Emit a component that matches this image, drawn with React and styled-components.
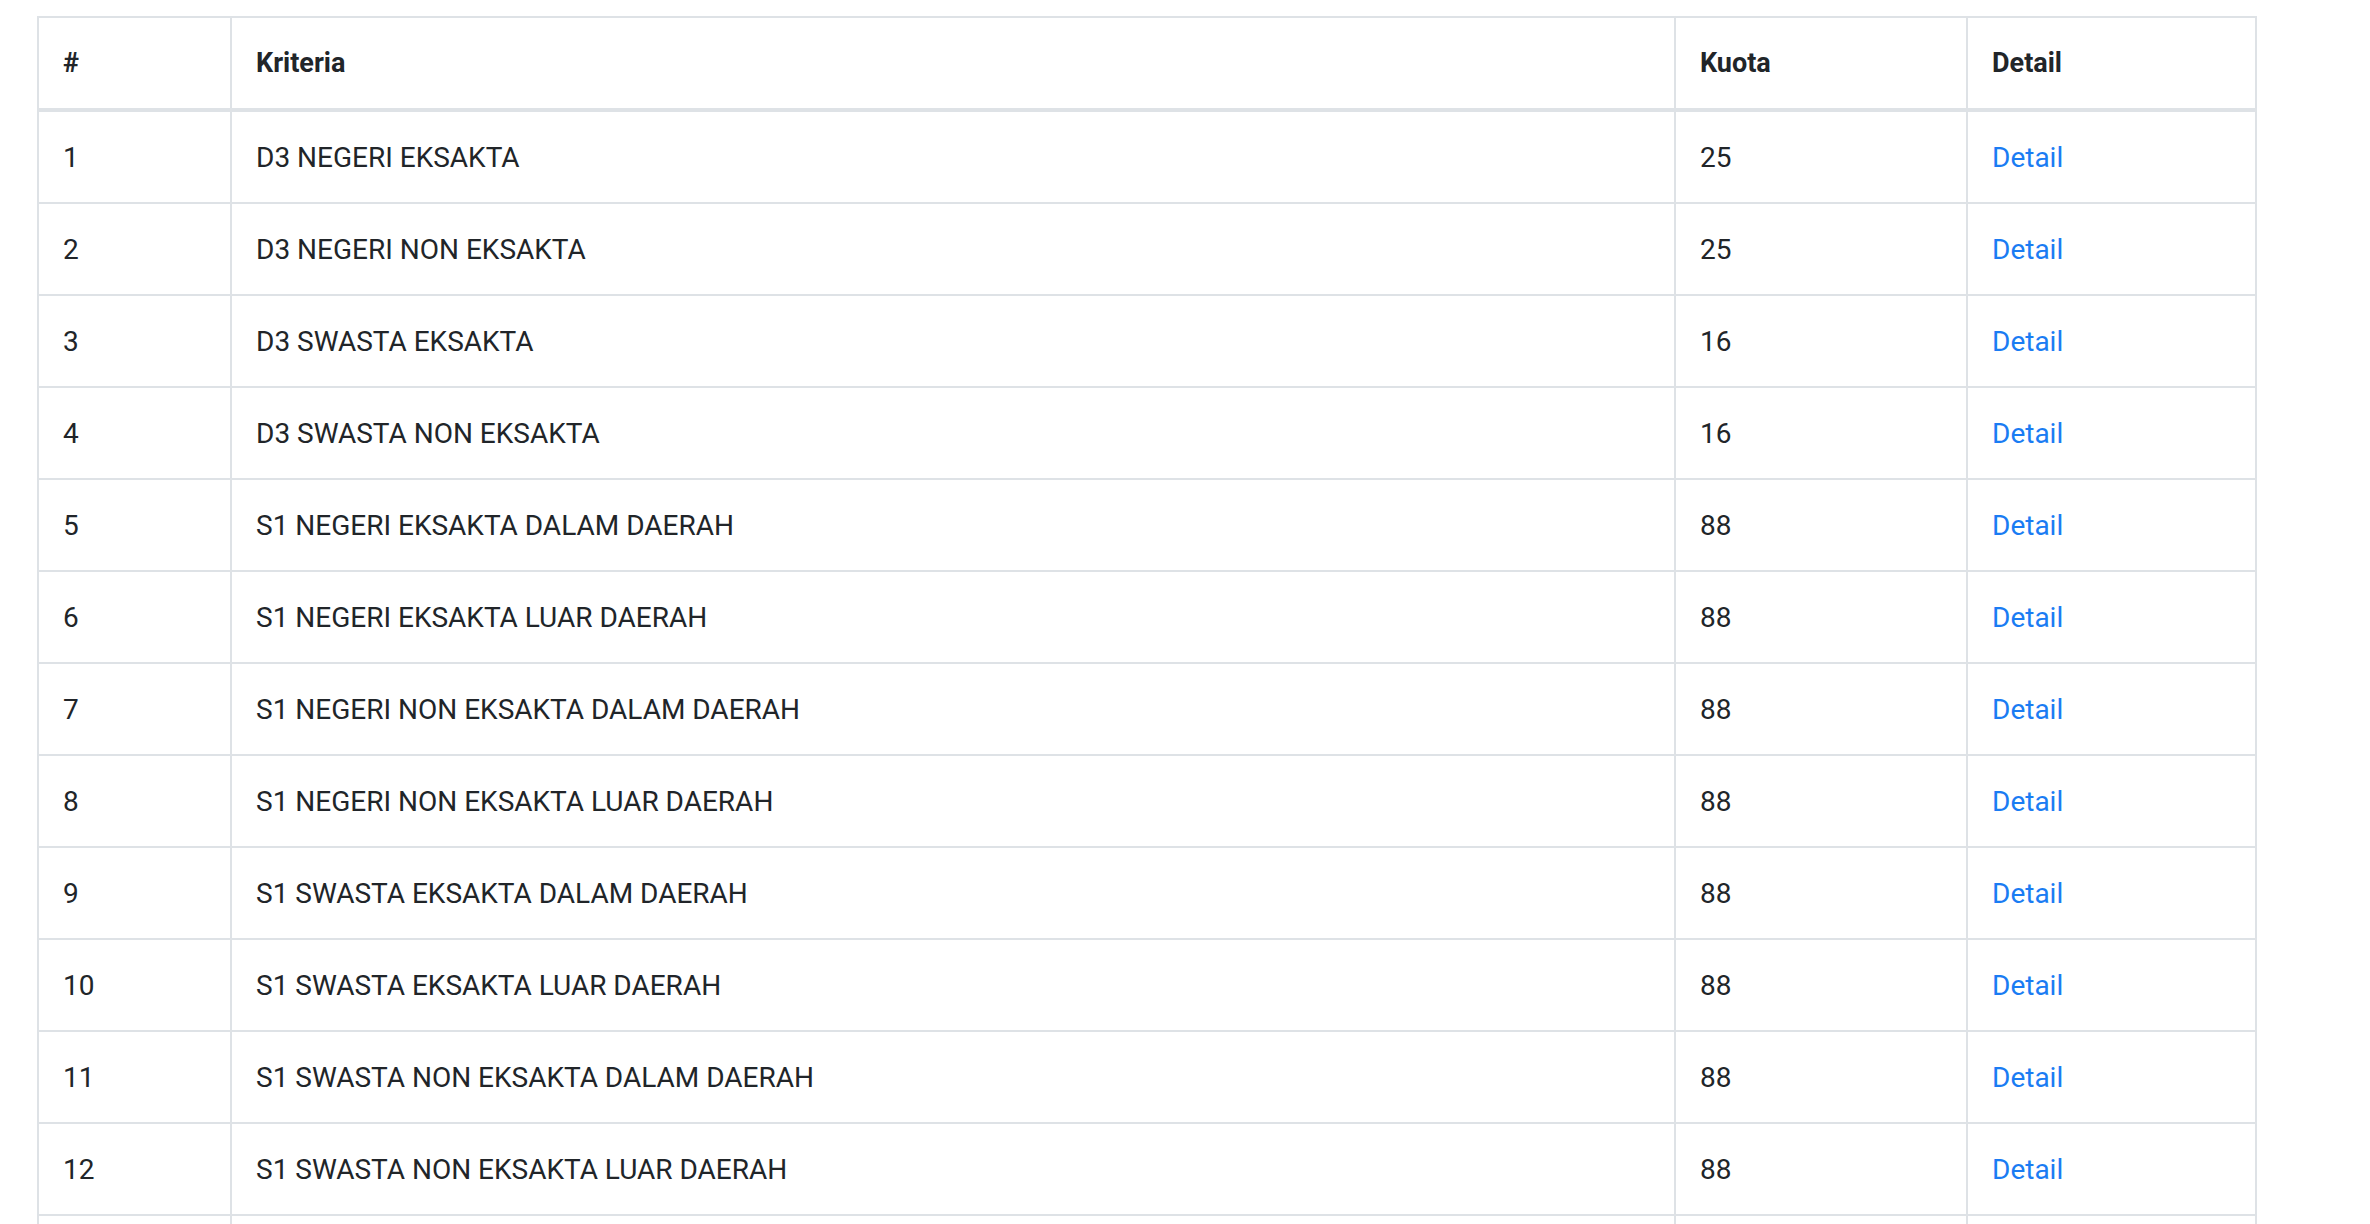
import React from 'react';
import styled, { createGlobalStyle } from 'styled-components';

const GlobalStyle = createGlobalStyle`
  body {
    margin: 0;
    background: #fff;
    font-family: Roboto, "Liberation Sans", sans-serif;
    color: #212529;
  }
`;

const Page = styled.div`
  padding: 16px 113px 0 37px;
`;

const Table = styled.table`
  width: 2220px;
  table-layout: fixed;
  border-collapse: collapse;
  border: 2px solid #dee2e6;
  font-size: 28px;
  line-height: 38px;
`;

const HeadCell = styled.th`
  text-align: left;
  font-weight: 700;
  font-size: 27px;
  padding: 26px 24px;
  border: 2px solid #dee2e6;
  border-bottom-width: 4px;
`;

const Cell = styled.td`
  padding: 27px 24px 25px;
  border: 2px solid #dee2e6;
`;

const DetailLink = styled.a`
  color: #1a7cf3;
  text-decoration: none;
  cursor: pointer;
`;

const rows = [
  ['D3 NEGERI EKSAKTA', 25],
  ['D3 NEGERI NON EKSAKTA', 25],
  ['D3 SWASTA EKSAKTA', 16],
  ['D3 SWASTA NON EKSAKTA', 16],
  ['S1 NEGERI EKSAKTA DALAM DAERAH', 88],
  ['S1 NEGERI EKSAKTA LUAR DAERAH', 88],
  ['S1 NEGERI NON EKSAKTA DALAM DAERAH', 88],
  ['S1 NEGERI NON EKSAKTA LUAR DAERAH', 88],
  ['S1 SWASTA EKSAKTA DALAM DAERAH', 88],
  ['S1 SWASTA EKSAKTA LUAR DAERAH', 88],
  ['S1 SWASTA NON EKSAKTA DALAM DAERAH', 88],
  ['S1 SWASTA NON EKSAKTA LUAR DAERAH', 88],
  ['S2 NEGERI', 88],
];

const App = () => {
  return (
    <Page>
      <GlobalStyle />
      <Table>
        <colgroup>
          <col style={{ width: 193 }} />
          <col style={{ width: 1444 }} />
          <col style={{ width: 292 }} />
          <col style={{ width: 289 }} />
        </colgroup>
        <thead>
          <tr>
            <HeadCell>#</HeadCell>
            <HeadCell>Kriteria</HeadCell>
            <HeadCell>Kuota</HeadCell>
            <HeadCell>Detail</HeadCell>
          </tr>
        </thead>
        <tbody>
          {rows.map(([name, kuota], i) => (
            <tr key={name}>
              <Cell>{i + 1}</Cell>
              <Cell>{name}</Cell>
              <Cell>{kuota}</Cell>
              <Cell>
                <DetailLink>Detail</DetailLink>
              </Cell>
            </tr>
          ))}
        </tbody>
      </Table>
    </Page>
  );
};

export default App;
